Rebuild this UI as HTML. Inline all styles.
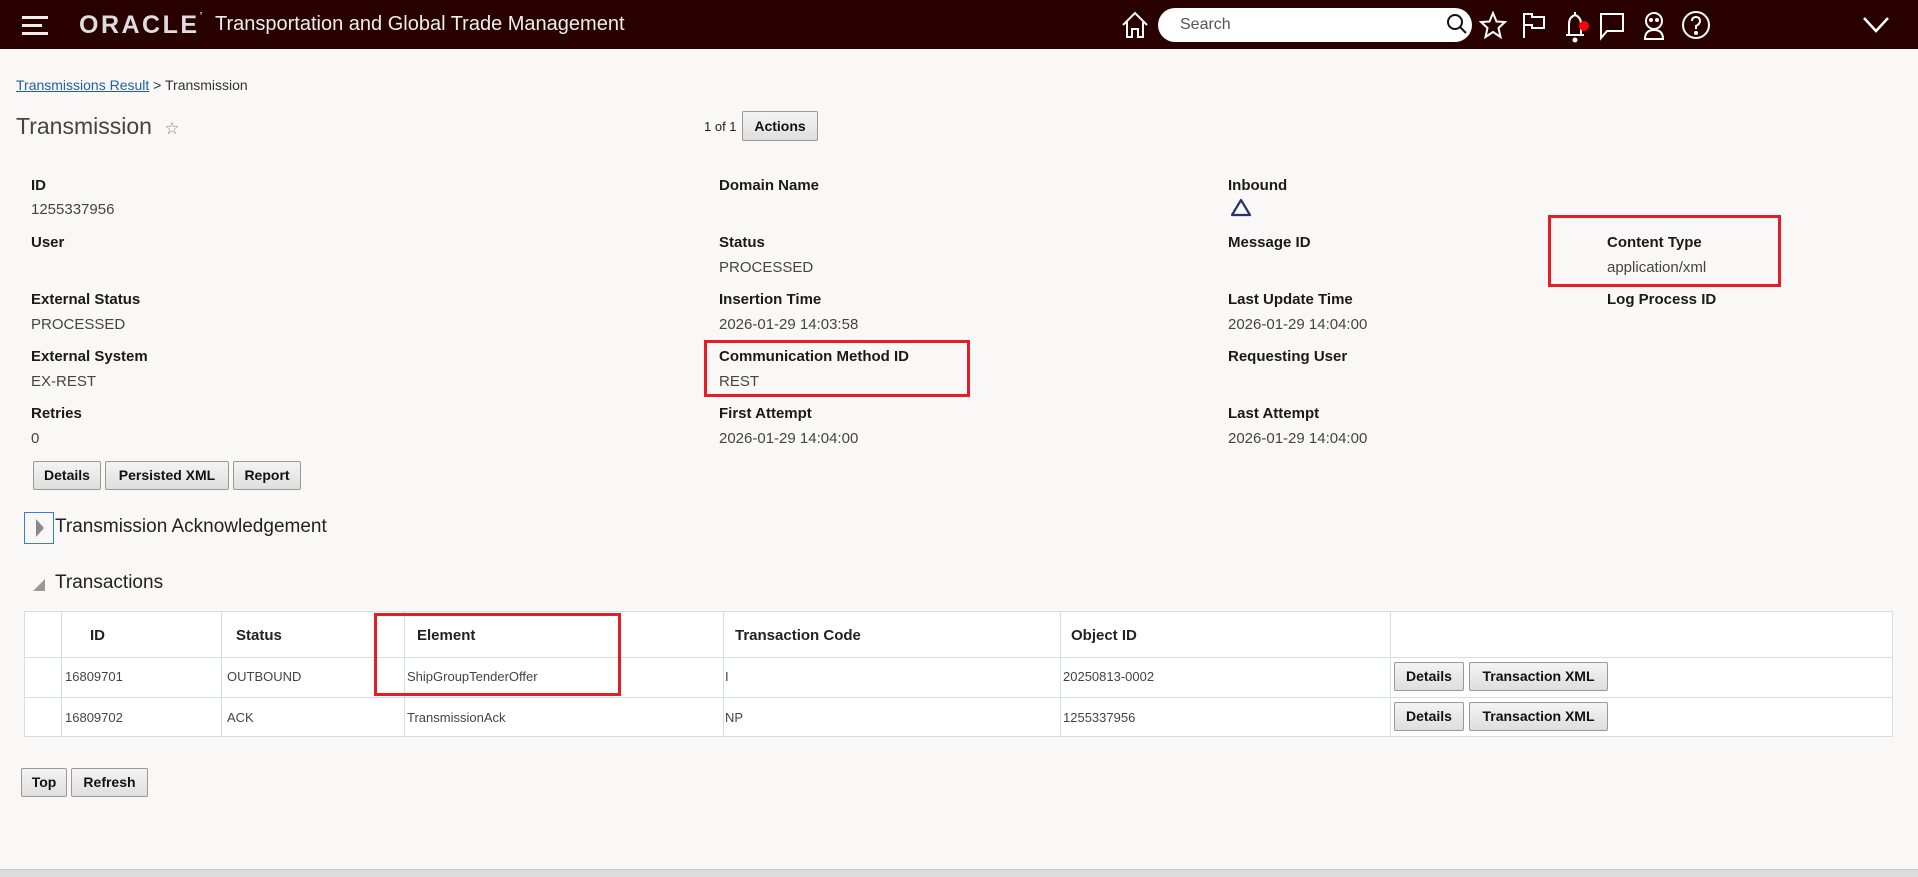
<!DOCTYPE html>
<html><head><meta charset="utf-8"><style>
*{margin:0;padding:0;box-sizing:border-box}
body{width:1918px;height:877px;background:#f9f8f6;font-family:"Liberation Sans",sans-serif;position:relative;overflow:hidden;color:#333}
.a{position:absolute;white-space:nowrap}
.hdr{position:absolute;left:0;top:0;width:1918px;height:49px;background:#290000}
.lbl{position:absolute;font-size:15px;font-weight:bold;color:#1a1a1a}
.val{position:absolute;font-size:15px;color:#444}
.btn{position:absolute;border:1px solid #999;background:linear-gradient(#f4f4f4,#dedede);border-radius:2px;font-size:14px;font-weight:bold;color:#111;text-align:center;height:29px;line-height:27px}
.red{position:absolute;border:3px solid #e41e26}
.vl{position:absolute;width:1px;background:#d6dde3}
.hl{position:absolute;height:1px;background:#d6dde3}
.th{position:absolute;font-size:15px;font-weight:bold;color:#222}
.td{position:absolute;font-size:13px;color:#444}
</style></head><body>
<div class="hdr">
 <div class="a" style="left:22px;top:16px;width:26px;height:3px;background:#eee"></div>
 <div class="a" style="left:22px;top:24px;width:20px;height:3px;background:#eee"></div>
 <div class="a" style="left:22px;top:32px;width:26px;height:3px;background:#eee"></div>
 <div class="a" style="left:79px;top:11px;font-size:25px;color:#ddd;letter-spacing:2.5px;font-weight:bold">ORACLE<span style="font-size:10px;vertical-align:top">’</span></div>
 <div class="a" style="left:215px;top:13px;font-size:20px;color:#eee">Transportation and Global Trade Management</div>
 <svg class="a" style="left:1120px;top:10px" width="30" height="30" viewBox="0 0 30 30" fill="none" stroke="#fff" stroke-width="2"><path d="M3 15 L15 3 L27 15 M7 12 V27 H12 V19 H18 V27 H23 V12"/></svg>
 <div class="a" style="left:1158px;top:8px;width:314px;height:34px;background:#fff;border-radius:17px"></div>
 <div class="a" style="left:1180px;top:16px;font-size:16px;color:#555">Search</div>
 <svg class="a" style="left:1446px;top:13px" width="22" height="22" viewBox="0 0 22 22" fill="none" stroke="#111" stroke-width="2"><circle cx="9" cy="9" r="7"/><path d="M14 14 L20 20"/></svg>
 <svg class="a" style="left:1479px;top:11px" width="28" height="28" viewBox="0 0 28 28" fill="none" stroke="#fff" stroke-width="2"><path d="M14 2 L17.5 10.5 L26 11 L19.5 17 L21.5 26 L14 21 L6.5 26 L8.5 17 L2 11 L10.5 10.5 Z"/></svg>
 <svg class="a" style="left:1521px;top:11px" width="26" height="28" viewBox="0 0 26 28" fill="none" stroke="#fff" stroke-width="2"><path d="M3 27 V3 H11 V6 H23 V17 H11 V14 H3"/></svg>
 <svg class="a" style="left:1562px;top:8px" width="32" height="36" viewBox="0 0 32 36" fill="none" stroke="#fff" stroke-width="2"><path d="M4 27 H22 M7 27 V16 Q7 9 13 7 V4 M13 7 Q19 9 19 16 V27"/><circle cx="13" cy="32" r="1.5" fill="#fff"/><circle cx="22" cy="18" r="5" fill="#f00" stroke="none"/></svg>
 <svg class="a" style="left:1598px;top:11px" width="28" height="30" viewBox="0 0 28 30" fill="none" stroke="#fff" stroke-width="2"><path d="M3 3 H25 V20 H9 L3 27 Z"/></svg>
 <svg class="a" style="left:1639px;top:9px" width="30" height="32" viewBox="0 0 30 32" fill="none" stroke="#fff" stroke-width="2"><circle cx="15" cy="12" r="8"/><path d="M6 30 Q6 21 15 21 Q24 21 24 30 Z"/><circle cx="12" cy="11" r="1" fill="#fff"/><circle cx="18" cy="11" r="1" fill="#fff"/></svg>
 <svg class="a" style="left:1680px;top:9px" width="32" height="32" viewBox="0 0 32 32" fill="none" stroke="#fff" stroke-width="2"><circle cx="16" cy="16" r="13"/><path d="M12 12 Q12 8 16 8 Q20 8 20 12 Q20 15 16 17 V20"/><circle cx="16" cy="24" r="1" fill="#fff"/></svg>
 <svg class="a" style="left:1862px;top:16px" width="28" height="18" viewBox="0 0 28 18" fill="none" stroke="#fff" stroke-width="2.5"><path d="M2 2 L14 15 L26 2"/></svg>
</div>

<div class="a" style="left:16px;top:77px;font-size:14px;color:#333"><span style="color:#1f5fa8;text-decoration:underline">Transmissions Result</span> &gt; Transmission</div>
<div class="a" style="left:16px;top:113px;font-size:23px;color:#444">Transmission <span style="font-size:17px;color:#888;margin-left:6px">☆</span></div>
<div class="a" style="left:704px;top:119px;font-size:13px;color:#222">1 of 1</div>
<div class="btn" style="left:742px;top:111px;width:76px;height:30px;line-height:28px">Actions</div>

<div class="lbl" style="left:31px;top:177px">ID</div><div class="val" style="left:31px;top:201px">1255337956</div>
<div class="lbl" style="left:31px;top:234px">User</div>
<div class="lbl" style="left:31px;top:291px">External Status</div><div class="val" style="left:31px;top:316px">PROCESSED</div>
<div class="lbl" style="left:31px;top:348px">External System</div><div class="val" style="left:31px;top:373px">EX-REST</div>
<div class="lbl" style="left:31px;top:405px">Retries</div><div class="val" style="left:31px;top:430px">0</div>

<div class="lbl" style="left:719px;top:177px">Domain Name</div>
<div class="lbl" style="left:719px;top:234px">Status</div><div class="val" style="left:719px;top:259px">PROCESSED</div>
<div class="lbl" style="left:719px;top:291px">Insertion Time</div><div class="val" style="left:719px;top:316px">2026-01-29 14:03:58</div>
<div class="lbl" style="left:719px;top:348px">Communication Method ID</div><div class="val" style="left:719px;top:373px">REST</div>
<div class="lbl" style="left:719px;top:405px">First Attempt</div><div class="val" style="left:719px;top:430px">2026-01-29 14:04:00</div>

<div class="lbl" style="left:1228px;top:177px">Inbound</div>
<svg class="a" style="left:1230px;top:198px" width="22" height="20" viewBox="0 0 22 20" fill="none" stroke="#2a3370" stroke-width="2.2" stroke-linejoin="round"><path d="M11 2 L20 17 H2 Z"/></svg>
<div class="lbl" style="left:1228px;top:234px">Message ID</div>
<div class="lbl" style="left:1228px;top:291px">Last Update Time</div><div class="val" style="left:1228px;top:316px">2026-01-29 14:04:00</div>
<div class="lbl" style="left:1228px;top:348px">Requesting User</div>
<div class="lbl" style="left:1228px;top:405px">Last Attempt</div><div class="val" style="left:1228px;top:430px">2026-01-29 14:04:00</div>

<div class="lbl" style="left:1607px;top:234px">Content Type</div><div class="val" style="left:1607px;top:259px">application/xml</div>
<div class="lbl" style="left:1607px;top:291px">Log Process ID</div>

<div class="red" style="left:1548px;top:215px;width:233px;height:72px"></div>
<div class="red" style="left:704px;top:340px;width:266px;height:57px"></div>

<div class="btn" style="left:33px;top:461px;width:68px">Details</div>
<div class="btn" style="left:105px;top:461px;width:124px">Persisted XML</div>
<div class="btn" style="left:233px;top:461px;width:68px">Report</div>

<div class="a" style="left:24px;top:512px;width:30px;height:32px;border:1px solid #3a7bd5"></div>
<div class="a" style="left:36px;top:519px;width:0;height:0;border-top:9px solid transparent;border-bottom:9px solid transparent;border-left:8px solid #888"></div>
<div class="a" style="left:55px;top:516px;font-size:19px;color:#222">Transmission Acknowledgement</div>

<div class="a" style="left:33px;top:579px;width:0;height:0;border-left:12px solid transparent;border-bottom:12px solid #999"></div>
<div class="a" style="left:55px;top:572px;font-size:19px;color:#222">Transactions</div>

<div class="a" style="left:24px;top:611px;width:1869px;height:126px;background:#fff;border:1px solid #d6dde3"></div>
<div class="hl" style="left:24px;top:657px;width:1869px"></div>
<div class="hl" style="left:24px;top:697px;width:1869px"></div>
<div class="vl" style="left:61px;top:611px;height:126px"></div>
<div class="vl" style="left:221px;top:611px;height:126px"></div>
<div class="vl" style="left:404px;top:611px;height:126px"></div>
<div class="vl" style="left:723px;top:611px;height:126px"></div>
<div class="vl" style="left:1060px;top:611px;height:126px"></div>
<div class="vl" style="left:1390px;top:611px;height:126px"></div>
<div class="th" style="left:90px;top:627px">ID</div>
<div class="th" style="left:236px;top:627px">Status</div>
<div class="th" style="left:417px;top:627px">Element</div>
<div class="th" style="left:735px;top:627px">Transaction Code</div>
<div class="th" style="left:1071px;top:627px">Object ID</div>
<div class="td" style="left:65px;top:669px">16809701</div>
<div class="td" style="left:227px;top:669px">OUTBOUND</div>
<div class="td" style="left:407px;top:669px">ShipGroupTenderOffer</div>
<div class="td" style="left:725px;top:669px">I</div>
<div class="td" style="left:1063px;top:669px">20250813-0002</div>
<div class="td" style="left:65px;top:710px">16809702</div>
<div class="td" style="left:227px;top:710px">ACK</div>
<div class="td" style="left:407px;top:710px">TransmissionAck</div>
<div class="td" style="left:725px;top:710px">NP</div>
<div class="td" style="left:1063px;top:710px">1255337956</div>
<div class="btn" style="left:1394px;top:662px;width:70px">Details</div>
<div class="btn" style="left:1469px;top:662px;width:139px">Transaction XML</div>
<div class="btn" style="left:1394px;top:702px;width:70px">Details</div>
<div class="btn" style="left:1469px;top:702px;width:139px">Transaction XML</div>
<div class="red" style="left:374px;top:613px;width:247px;height:83px"></div>

<div class="btn" style="left:21px;top:768px;width:46px">Top</div>
<div class="btn" style="left:71px;top:768px;width:77px">Refresh</div>

<div class="a" style="left:0;top:869px;width:1918px;height:8px;background:#dcdcdc;border-top:1px solid #c8c8c8"></div>
</body></html>
